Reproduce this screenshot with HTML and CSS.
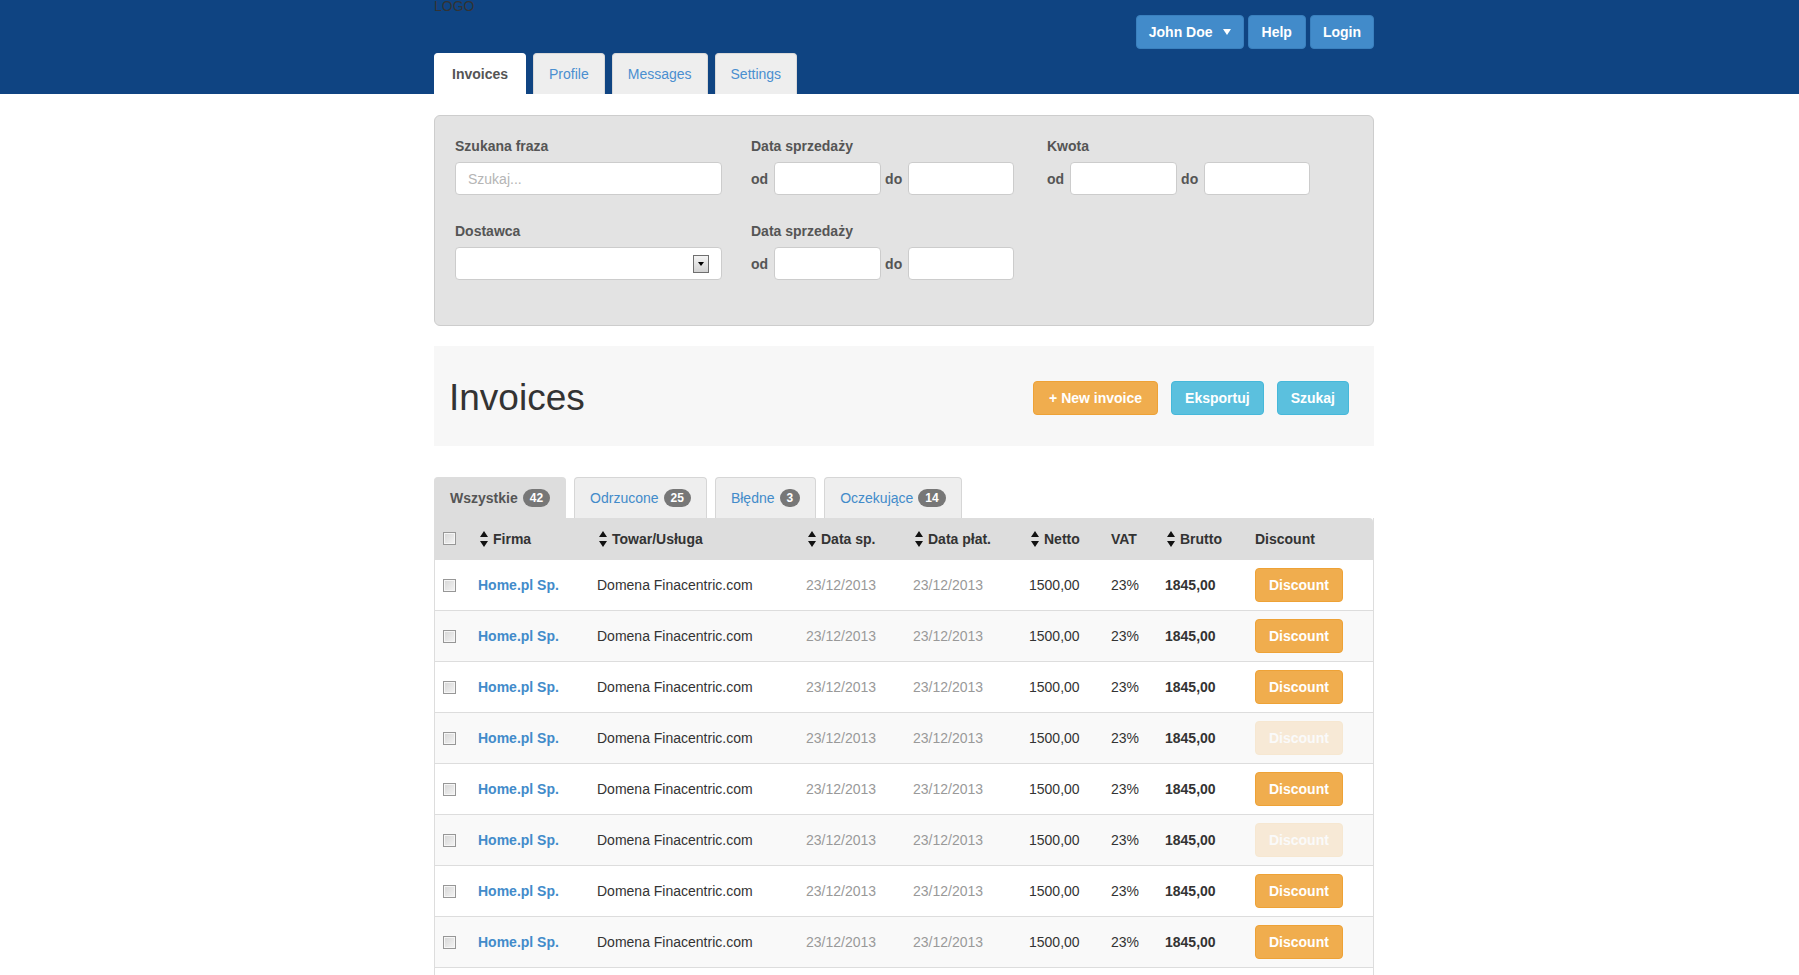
FILE: index.html
```html
<!DOCTYPE html>
<html lang="pl">
<head>
<meta charset="utf-8">
<title>Invoices</title>
<link rel="stylesheet" href="styles.css">
</head>
<body>
<header class="topbar">
  <div class="container topbar-inner">
    <div class="topbar-row">
      <div class="logo">LOGO</div>
      <div class="user-actions">
        <button class="btn btn-primary">John Doe<span class="caret"></span></button>
        <button class="btn btn-primary btn-help">Help</button>
        <button class="btn btn-primary">Login</button>
      </div>
    </div>
    <nav class="main-tabs">
      <a class="main-tab active">Invoices</a>
      <a class="main-tab">Profile</a>
      <a class="main-tab">Messages</a>
      <a class="main-tab">Settings</a>
    </nav>
  </div>
</header>

<main class="container">
  <section class="filters">
    <div class="filter-group">
      <div class="filter-label">Szukana fraza</div>
      <input class="field field-wide" type="text" placeholder="Szukaj...">
    </div>
    <div class="filter-group">
      <div class="filter-label">Data sprzedaży</div>
      <div class="range">
        <span class="range-label">od</span>
        <input class="field field-from" type="text">
        <span class="range-label range-to">do</span>
        <input class="field field-to" type="text">
      </div>
    </div>
    <div class="filter-group">
      <div class="filter-label">Kwota</div>
      <div class="range">
        <span class="range-label">od</span>
        <input class="field field-from" type="text">
        <span class="range-label range-to">do</span>
        <input class="field field-to" type="text">
      </div>
    </div>
    <div class="filter-group">
      <div class="filter-label">Dostawca</div>
      <div class="field field-wide select"><span class="select-arrow"></span></div>
    </div>
    <div class="filter-group">
      <div class="filter-label">Data sprzedaży</div>
      <div class="range">
        <span class="range-label">od</span>
        <input class="field field-from" type="text">
        <span class="range-label range-to">do</span>
        <input class="field field-to" type="text">
      </div>
    </div>
  </section>

  <section class="page-head">
    <h1 class="page-title">Invoices</h1>
    <div class="page-actions">
      <button class="btn btn-warning btn-new">+ New invoice</button>
      <button class="btn btn-info">Eksportuj</button>
      <button class="btn btn-info">Szukaj</button>
    </div>
  </section>

  <nav class="list-tabs">
    <a class="list-tab active">Wszystkie <span class="badge">42</span></a>
    <a class="list-tab">Odrzucone <span class="badge">25</span></a>
    <a class="list-tab">Błędne <span class="badge">3</span></a>
    <a class="list-tab">Oczekujące <span class="badge">14</span></a>
  </nav>

  <table class="invoice-table">
    <thead>
      <tr>
        <th class="c-check"><span class="cb"></span></th>
        <th class="c-firm"><span class="sortable"><svg class="sort" width="8" height="16" viewBox="0 0 8 16"><path d="M4 0L8 6H0Z M0 10H8L4 16Z"/></svg>Firma</span></th>
        <th class="c-item"><span class="sortable"><svg class="sort" width="8" height="16" viewBox="0 0 8 16"><path d="M4 0L8 6H0Z M0 10H8L4 16Z"/></svg>Towar/Usługa</span></th>
        <th class="c-date"><span class="sortable"><svg class="sort" width="8" height="16" viewBox="0 0 8 16"><path d="M4 0L8 6H0Z M0 10H8L4 16Z"/></svg>Data sp.</span></th>
        <th class="c-pay"><span class="sortable"><svg class="sort" width="8" height="16" viewBox="0 0 8 16"><path d="M4 0L8 6H0Z M0 10H8L4 16Z"/></svg>Data płat.</span></th>
        <th class="c-net"><span class="sortable"><svg class="sort" width="8" height="16" viewBox="0 0 8 16"><path d="M4 0L8 6H0Z M0 10H8L4 16Z"/></svg>Netto</span></th>
        <th class="c-vat">VAT</th>
        <th class="c-gross"><span class="sortable"><svg class="sort" width="8" height="16" viewBox="0 0 8 16"><path d="M4 0L8 6H0Z M0 10H8L4 16Z"/></svg>Brutto</span></th>
        <th class="c-disc">Discount</th>
      </tr>
    </thead>
    <tbody>
      <tr>
        <td><span class="cb"></span></td>
        <td><a class="company">Home.pl Sp.</a></td>
        <td>Domena Finacentric.com</td>
        <td class="date">23/12/2013</td>
        <td class="date">23/12/2013</td>
        <td>1500,00</td>
        <td>23%</td>
        <td class="gross">1845,00</td>
        <td><button class="btn btn-warning">Discount</button></td>
      </tr>
      <tr>
        <td><span class="cb"></span></td>
        <td><a class="company">Home.pl Sp.</a></td>
        <td>Domena Finacentric.com</td>
        <td class="date">23/12/2013</td>
        <td class="date">23/12/2013</td>
        <td>1500,00</td>
        <td>23%</td>
        <td class="gross">1845,00</td>
        <td><button class="btn btn-warning">Discount</button></td>
      </tr>
      <tr>
        <td><span class="cb"></span></td>
        <td><a class="company">Home.pl Sp.</a></td>
        <td>Domena Finacentric.com</td>
        <td class="date">23/12/2013</td>
        <td class="date">23/12/2013</td>
        <td>1500,00</td>
        <td>23%</td>
        <td class="gross">1845,00</td>
        <td><button class="btn btn-warning">Discount</button></td>
      </tr>
      <tr>
        <td><span class="cb"></span></td>
        <td><a class="company">Home.pl Sp.</a></td>
        <td>Domena Finacentric.com</td>
        <td class="date">23/12/2013</td>
        <td class="date">23/12/2013</td>
        <td>1500,00</td>
        <td>23%</td>
        <td class="gross">1845,00</td>
        <td><button class="btn btn-warning is-disabled">Discount</button></td>
      </tr>
      <tr>
        <td><span class="cb"></span></td>
        <td><a class="company">Home.pl Sp.</a></td>
        <td>Domena Finacentric.com</td>
        <td class="date">23/12/2013</td>
        <td class="date">23/12/2013</td>
        <td>1500,00</td>
        <td>23%</td>
        <td class="gross">1845,00</td>
        <td><button class="btn btn-warning">Discount</button></td>
      </tr>
      <tr>
        <td><span class="cb"></span></td>
        <td><a class="company">Home.pl Sp.</a></td>
        <td>Domena Finacentric.com</td>
        <td class="date">23/12/2013</td>
        <td class="date">23/12/2013</td>
        <td>1500,00</td>
        <td>23%</td>
        <td class="gross">1845,00</td>
        <td><button class="btn btn-warning is-disabled">Discount</button></td>
      </tr>
      <tr>
        <td><span class="cb"></span></td>
        <td><a class="company">Home.pl Sp.</a></td>
        <td>Domena Finacentric.com</td>
        <td class="date">23/12/2013</td>
        <td class="date">23/12/2013</td>
        <td>1500,00</td>
        <td>23%</td>
        <td class="gross">1845,00</td>
        <td><button class="btn btn-warning">Discount</button></td>
      </tr>
      <tr>
        <td><span class="cb"></span></td>
        <td><a class="company">Home.pl Sp.</a></td>
        <td>Domena Finacentric.com</td>
        <td class="date">23/12/2013</td>
        <td class="date">23/12/2013</td>
        <td>1500,00</td>
        <td>23%</td>
        <td class="gross">1845,00</td>
        <td><button class="btn btn-warning">Discount</button></td>
      </tr>
      <tr>
        <td><span class="cb"></span></td>
        <td><a class="company">Home.pl Sp.</a></td>
        <td>Domena Finacentric.com</td>
        <td class="date">23/12/2013</td>
        <td class="date">23/12/2013</td>
        <td>1500,00</td>
        <td>23%</td>
        <td class="gross">1845,00</td>
        <td><button class="btn btn-warning">Discount</button></td>
      </tr>
      <tr>
        <td><span class="cb"></span></td>
        <td><a class="company">Home.pl Sp.</a></td>
        <td>Domena Finacentric.com</td>
        <td class="date">23/12/2013</td>
        <td class="date">23/12/2013</td>
        <td>1500,00</td>
        <td>23%</td>
        <td class="gross">1845,00</td>
        <td><button class="btn btn-warning">Discount</button></td>
      </tr>
    </tbody>
  </table>
</main>
</body>
</html>
```
FILE: styles.css
```css
* {
  box-sizing: border-box;
}

body {
  margin: 0;
  font-family: "Liberation Sans", Arial, sans-serif;
  font-size: 14px;
  line-height: 20px;
  color: #333;
  background: #fff;
}

.container {
  width: 940px;
  margin-left: calc(50% - 465.5px);
}

/* ---------- top bar ---------- */
.topbar {
  background: #0f4482;
  height: 94px;
}

.topbar-inner {
  display: flex;
  flex-direction: column;
  height: 94px;
}

.topbar-row {
  flex: 1;
  display: flex;
  justify-content: space-between;
  align-items: flex-start;
}

.logo {
  margin-top: -4px;
  color: #333;
  font-size: 14px;
  line-height: 20px;
}

.user-actions {
  display: flex;
  gap: 4px;
  margin-top: 15px;
}

.main-tabs {
  display: flex;
  gap: 7px;
  align-items: flex-end;
}

.main-tab {
  display: block;
  padding: 10px 15px;
  border: 1px solid #d9d9d9;
  border-bottom: 0;
  border-radius: 4px 4px 0 0;
  background: #eee;
  color: #4a8fd0;
  cursor: pointer;
}

.main-tab.active {
  background: #fff;
  border-color: #fff;
  color: #555;
  font-weight: bold;
  padding: 10px 17px;
}

/* ---------- buttons ---------- */
.btn {
  display: inline-block;
  padding: 6px 13px;
  font-family: "Liberation Sans", Arial, sans-serif;
  font-size: 14px;
  font-weight: bold;
  line-height: 20px;
  color: #fff;
  border: 1px solid transparent;
  border-radius: 4px;
  cursor: pointer;
  white-space: nowrap;
}

.btn-primary {
  background: #428bca;
  border-color: #3a80be;
  display: inline-flex;
  align-items: center;
  padding: 6px 12px;
}

.btn-primary.btn-help {
  padding: 6px 13px;
}

.caret {
  display: inline-block;
  width: 0;
  height: 0;
  margin-left: 10px;
  border-top: 6px solid #fff;
  border-left: 4px solid transparent;
  border-right: 4px solid transparent;
}

.btn-warning {
  background: #f0ad4e;
  border-color: #eea236;
}

.btn-info {
  background: #5bc0de;
  border-color: #46b8da;
}

.btn-new {
  padding: 6px 15px;
}

.btn.is-disabled {
  opacity: 0.2;
  cursor: default;
}

/* ---------- filters ---------- */
.filters {
  margin-top: 21px;
  background: #e3e3e3;
  border: 1px solid #cdcdcd;
  border-radius: 6px;
  padding: 20px 20px 45px;
  display: grid;
  grid-template-columns: 268px 268px 268px;
  column-gap: 28px;
  row-gap: 26px;
}

.filter-label {
  font-weight: bold;
  color: #555;
  margin-bottom: 6px;
}

.field {
  display: block;
  height: 33px;
  padding: 6px 12px;
  border: 1px solid #ccc;
  border-radius: 4px;
  background: #fff;
  font-family: "Liberation Sans", Arial, sans-serif;
  font-size: 14px;
  color: #555;
  outline: none;
}

.field::placeholder {
  color: #b5b5b5;
}

.field-wide {
  width: 267px;
}

.range {
  display: flex;
  align-items: center;
}

.range-label {
  font-weight: bold;
  color: #555;
  margin-right: 6px;
}

.range-to {
  margin-left: 4px;
}

.field-from {
  width: 107px;
}

.field-to {
  width: 106px;
}

.select {
  display: flex;
  align-items: center;
  justify-content: flex-end;
  padding-right: 12px;
}

.select-arrow {
  width: 16px;
  height: 18px;
  border: 1px solid #6f6f6f;
  background: linear-gradient(#f4f4f4, #d2d2d2);
  display: flex;
  align-items: center;
  justify-content: center;
}

.select-arrow::after {
  content: "";
  width: 0;
  height: 0;
  border-top: 4px solid #000;
  border-left: 3.5px solid transparent;
  border-right: 3.5px solid transparent;
}

/* ---------- page head ---------- */
.page-head {
  margin-top: 20px;
  height: 100px;
  background: #f7f7f7;
  display: flex;
  align-items: center;
  justify-content: space-between;
  padding: 4px 25px 0 15px;
}

.page-title {
  margin: 0;
  font-size: 37px;
  line-height: 40px;
  font-weight: normal;
  color: #333;
}

.page-actions {
  display: flex;
  gap: 13px;
}

/* ---------- list tabs ---------- */
.list-tabs {
  margin-top: 31px;
  display: flex;
  gap: 8px;
  align-items: flex-end;
}

.list-tab {
  display: inline-flex;
  align-items: center;
  gap: 5px;
  padding: 10px 15px;
  border: 1px solid #d6d6d6;
  border-bottom: 0;
  border-radius: 4px 4px 0 0;
  background: #eee;
  color: #428bca;
  cursor: pointer;
}

.list-tab.active {
  background: #ddd;
  border-color: #ddd;
  color: #555;
  font-weight: bold;
}

.badge {
  display: inline-block;
  min-width: 10px;
  padding: 3px 7px;
  font-size: 12px;
  font-weight: bold;
  line-height: 12px;
  color: #fff;
  text-align: center;
  background: #777;
  border-radius: 10px;
}

/* ---------- table ---------- */
.invoice-table {
  width: 940px;
  border-collapse: separate;
  border-spacing: 0;
  table-layout: fixed;
  border-left: 1px solid #ddd;
  border-right: 1px solid #ddd;
}

.invoice-table th {
  height: 41px;
  background: #ddd;
  padding: 0 8px;
  text-align: left;
  vertical-align: middle;
  font-weight: bold;
  color: #333;
  white-space: nowrap;
  line-height: 20px;
}

.invoice-table th:last-child {
  border-top-right-radius: 4px;
}

.invoice-table td {
  height: 51px;
  padding: 0 8px;
  border-top: 1px solid #ddd;
  vertical-align: middle;
  white-space: nowrap;
  color: #333;
}

.invoice-table tbody tr:nth-child(even) td {
  background: #f9f9f9;
}

.c-check { width: 35px; }
.c-firm { width: 119px; }
.c-item { width: 209px; }
.c-date { width: 107px; }
.c-pay { width: 116px; }
.c-net { width: 82px; }
.c-vat { width: 54px; }
.c-gross { width: 90px; }
.c-disc { width: 126px; }

.sortable {
  display: inline-flex;
  align-items: center;
  vertical-align: middle;
}

.sort {
  display: block;
  fill: #111;
  margin-left: 2px;
  margin-right: 5px;
}

.cb {
  display: block;
  width: 13px;
  height: 13px;
  border: 1px solid #979797;
  background: linear-gradient(135deg, #d6d6d6, #f4f4f4);
  box-shadow: inset 0 0 0 1px #f6f6f6;
}

.company {
  color: #428bca;
  font-weight: bold;
  cursor: pointer;
}

.invoice-table td.date {
  color: #999;
}

.invoice-table td.gross {
  font-weight: bold;
}
```
